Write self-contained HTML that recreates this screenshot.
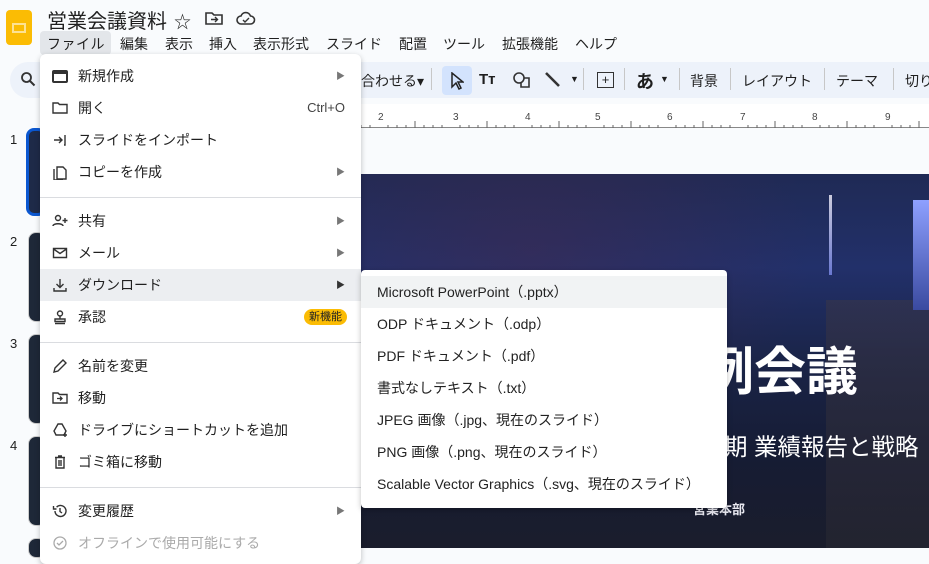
<!DOCTYPE html>
<html><head><meta charset="utf-8"><style>
*{margin:0;padding:0;box-sizing:border-box}
body{width:929px;height:548px;overflow:hidden;background:#f9fbfd;font-family:"Liberation Sans","Noto Sans CJK JP",sans-serif;color:#1f1f1f;position:relative}
.a{position:absolute;white-space:nowrap}
.menu{position:absolute;left:40px;top:54px;width:321px;height:510px;background:#fff;border-radius:6px;box-shadow:0 2px 6px rgba(0,0,0,.25)}
.it{position:absolute;left:0;width:321px;height:32px;font-size:14px;line-height:32px;padding-left:38px}
.it .arr{position:absolute;right:16px;top:0;font-size:9px;color:#777}
.ic{position:absolute;left:12px;top:8px;width:16px;height:16px}
.sep{position:absolute;left:0;width:321px;height:1px;background:#dadce0}
.sub{position:absolute;left:361px;top:270px;width:366px;height:238px;background:#fff;border-radius:4px;box-shadow:0 2px 6px rgba(0,0,0,.25)}
.si{position:absolute;left:0;width:366px;height:32px;line-height:32px;font-size:14px;padding-left:16px;color:#222}
</style></head><body>
<!-- header -->
<div class="a" style="left:6px;top:10px;width:26px;height:35px;background:#fbbc04;border-radius:4px"></div>
<div class="a" style="left:12px;top:23px;width:14px;height:10px;border:2px solid #fde293"></div>
<div class="a" style="left:47px;top:5px;font-size:20px">営業会議資料</div>
<div class="a" style="left:174px;top:8px;font-size:17px">☆</div>
<svg class="a" style="left:205px;top:11px" width="18" height="14"><path d="M1 2h6l2 2h8v9H1z" fill="none" stroke="#333" stroke-width="1.6"/><path d="M6 8.5h6M10 6l2.5 2.5L10 11" fill="none" stroke="#333" stroke-width="1.4"/></svg>
<svg class="a" style="left:236px;top:11px" width="20" height="14"><path d="M5 13a4 4 0 010-8 5 5 0 019.5 0 4 4 0 010 8z" fill="none" stroke="#333" stroke-width="1.6"/><path d="M7 9l2 2 4-4" fill="none" stroke="#333" stroke-width="1.4"/></svg>
<div class="a" style="left:40px;top:31px;width:71px;height:24px;background:#e3e6ea;border-radius:4px"></div>
<div class="a" style="left:47px;top:34px;font-size:14px;letter-spacing:0.5px">ファイル</div>
<div class="a" style="left:120px;top:34px;font-size:14px">編集</div>
<div class="a" style="left:165px;top:34px;font-size:14px">表示</div>
<div class="a" style="left:209px;top:34px;font-size:14px">挿入</div>
<div class="a" style="left:253px;top:34px;font-size:14px">表示形式</div>
<div class="a" style="left:326px;top:34px;font-size:14px">スライド</div>
<div class="a" style="left:399px;top:34px;font-size:14px">配置</div>
<div class="a" style="left:443px;top:34px;font-size:14px">ツール</div>
<div class="a" style="left:502px;top:34px;font-size:14px">拡張機能</div>
<div class="a" style="left:575px;top:34px;font-size:14px">ヘルプ</div>
<!-- toolbar -->
<div class="a" style="left:10px;top:62px;width:940px;height:36px;background:#edf2fa;border-radius:18px"></div>
<svg class="a" style="left:20px;top:71px" width="16" height="16"><circle cx="6.5" cy="6.5" r="4.5" fill="none" stroke="#333" stroke-width="1.8"/><path d="M10 10l4.5 4.5" stroke="#333" stroke-width="2"/></svg>
<div class="a" style="left:361px;top:71px;font-size:14px">合わせる▾</div>
<div class="a" style="left:431px;top:68px;width:1px;height:22px;background:#c7c7c7"></div>
<div class="a" style="left:442px;top:66px;width:30px;height:29px;background:#d3e3fd;border-radius:4px"></div>
<svg class="a" style="left:450px;top:72px" width="14" height="18"><path d="M2 1v14l4-4 3 6 2-1-3-6h5z" fill="none" stroke="#222" stroke-width="1.5"/></svg>
<div class="a" style="left:479px;top:71px;font-size:15px;font-weight:bold">Tт</div>
<svg class="a" style="left:512px;top:71px" width="20" height="18"><circle cx="7" cy="7" r="5" fill="none" stroke="#333" stroke-width="1.6"/><path d="M12 7h5v9H9v-4" fill="none" stroke="#333" stroke-width="1.6"/></svg>
<svg class="a" style="left:544px;top:71px" width="18" height="18"><path d="M2 2l13 13" stroke="#333" stroke-width="2.6"/></svg>
<div class="a" style="left:570px;top:74px;font-size:9px">▼</div>
<div class="a" style="left:583px;top:68px;width:1px;height:22px;background:#c7c7c7"></div>
<div class="a" style="left:597px;top:72px;width:17px;height:16px;border:1.5px solid #333;font-size:13px;line-height:13px;text-align:center">+</div>
<div class="a" style="left:624px;top:68px;width:1px;height:22px;background:#c7c7c7"></div>
<div class="a" style="left:636px;top:68px;font-size:18px;font-weight:bold">あ</div>
<div class="a" style="left:660px;top:74px;font-size:9px">▼</div>
<div class="a" style="left:679px;top:68px;width:1px;height:22px;background:#c7c7c7"></div>
<div class="a" style="left:690px;top:71px;font-size:14px">背景</div>
<div class="a" style="left:730px;top:68px;width:1px;height:22px;background:#c7c7c7"></div>
<div class="a" style="left:742px;top:71px;font-size:14px">レイアウト</div>
<div class="a" style="left:824px;top:68px;width:1px;height:22px;background:#c7c7c7"></div>
<div class="a" style="left:836px;top:71px;font-size:14px">テーマ</div>
<div class="a" style="left:893px;top:68px;width:1px;height:22px;background:#c7c7c7"></div>
<div class="a" style="left:905px;top:71px;font-size:14px">切り</div>
<!-- ruler -->
<div class="a" style="left:361px;top:104px;width:568px;height:24px;background:#fff;border-bottom:1px solid #888"></div>
<svg class="a" style="left:361px;top:110px" width="568" height="18">
<g fill="#444" font-size="10" font-family="Liberation Sans">
<text x="17" y="10">2</text><text x="92" y="10">3</text><text x="164" y="10">4</text><text x="234" y="10">5</text><text x="306" y="10">6</text><text x="379" y="10">7</text><text x="451" y="10">8</text><text x="524" y="10">9</text></g>
<g stroke="#666"><path d="M0 18v-3M9 18v-3M27 18v-3M36 18v-3M45 18v-3M54 18v-7M63 18v-3M72 18v-3M81 18v-3M99 18v-3M108 18v-3M117 18v-3M126 18v-7M135 18v-3M144 18v-3M153 18v-3M171 18v-3M180 18v-3M189 18v-3M198 18v-7M207 18v-3M216 18v-3M225 18v-3M243 18v-3M252 18v-3M261 18v-3M270 18v-7M279 18v-3M288 18v-3M297 18v-3M315 18v-3M324 18v-3M333 18v-3M342 18v-7M351 18v-3M360 18v-3M369 18v-3M387 18v-3M396 18v-3M405 18v-3M414 18v-7M423 18v-3M432 18v-3M441 18v-3M459 18v-3M468 18v-3M477 18v-3M486 18v-7M495 18v-3M504 18v-3M513 18v-3M531 18v-3M540 18v-3M549 18v-3M558 18v-7"/></g></svg>
<!-- slide -->
<div class="a" style="left:361px;top:174px;width:568px;height:374px;background:linear-gradient(180deg,#1f2a55 0%,#22306a 25%,#1a2448 50%,#161c34 75%,#1a1d2c 100%)"></div>
<div class="a" style="left:361px;top:174px;width:568px;height:374px;background:radial-gradient(ellipse at 30% 20%,rgba(80,40,70,.35),transparent 50%)"></div>
<div class="a" style="left:826px;top:300px;width:103px;height:248px;background:linear-gradient(180deg,rgba(60,55,70,.5),rgba(40,40,50,.6))"></div>
<div class="a" style="left:829px;top:195px;width:3px;height:80px;background:linear-gradient(#ccd,#6a78d0)"></div>
<div class="a" style="left:913px;top:200px;width:16px;height:110px;background:linear-gradient(#8ea0ff,#3a4aa0)"></div>
<div class="a" style="left:702px;top:342px;font-size:52px;font-weight:bold;color:#fff;line-height:62px">例会議</div>
<div class="a" style="left:724px;top:428px;font-size:23.5px;color:#fff">期 業績報告と戦略</div>
<div class="a" style="left:693px;top:499px;font-size:13px;font-weight:bold;color:#e8e8f0">営業本部</div>
<!-- left thumbnails -->
<div class="a" style="left:10px;top:132px;font-size:13px">1</div>
<div class="a" style="left:10px;top:234px;font-size:13px">2</div>
<div class="a" style="left:10px;top:336px;font-size:13px">3</div>
<div class="a" style="left:10px;top:438px;font-size:13px">4</div>
<div class="a" style="left:26px;top:128px;width:20px;height:88px;border:3px solid #0b57d0;border-radius:8px;background:#1e2a48"></div>
<div class="a" style="left:28px;top:232px;width:18px;height:90px;border:1px solid #ccc;border-radius:8px;background:#1e2838"></div>
<div class="a" style="left:28px;top:334px;width:18px;height:90px;border:1px solid #ccc;border-radius:8px;background:#1e2838"></div>
<div class="a" style="left:28px;top:436px;width:18px;height:90px;border:1px solid #ccc;border-radius:8px;background:#1e2838"></div>
<div class="a" style="left:28px;top:538px;width:18px;height:20px;border:1px solid #ccc;border-radius:8px;background:#1e2838"></div>
<!-- file menu -->
<div class="menu">
<div class="it" style="top:6px"><span class="ic" style="top:10px;height:13px;border:2px solid #333;border-top-width:4px;border-radius:2px"></span>新規作成<span class="arr">▶</span></div>
<div class="it" style="top:38px"><svg class="ic" viewBox="0 0 16 16"><path d="M1 3h5l1.5 1.5H15V13H1z" fill="none" stroke="#333" stroke-width="1.4"/></svg>開く<span class="arr" style="font-size:13px;color:#444">Ctrl+O</span></div>
<div class="it" style="top:70px"><svg class="ic" viewBox="0 0 16 16"><path d="M2 8h8M7 5l3 3-3 3M13 3v10h-1" fill="none" stroke="#333" stroke-width="1.4"/></svg>スライドをインポート</div>
<div class="it" style="top:102px"><svg class="ic" viewBox="0 0 16 16"><path d="M5 3h6l3 3v9H5zM2 5v11h9" fill="none" stroke="#333" stroke-width="1.4"/></svg>コピーを作成<span class="arr">▶</span></div>
<div class="sep" style="top:143px"></div>
<div class="it" style="top:151px"><svg class="ic" viewBox="0 0 16 16"><circle cx="6" cy="5" r="2.5" fill="none" stroke="#333" stroke-width="1.4"/><path d="M1 13c0-3 10-3 10 0M13 5v5M10.5 7.5h5" fill="none" stroke="#333" stroke-width="1.4"/></svg>共有<span class="arr">▶</span></div>
<div class="it" style="top:183px"><svg class="ic" viewBox="0 0 16 16"><path d="M1.5 3.5h13v9h-13zM1.5 4l6.5 4.5L14.5 4" fill="none" stroke="#333" stroke-width="1.4"/></svg>メール<span class="arr">▶</span></div>
<div class="it" style="top:215px;background:#eceef1"><svg class="ic" viewBox="0 0 16 16"><path d="M8 2v8M4.5 7L8 10.5 11.5 7M2 11v3h12v-3" fill="none" stroke="#333" stroke-width="1.4"/></svg>ダウンロード<span class="arr" style="color:#333">▶</span></div>
<div class="it" style="top:247px"><svg class="ic" viewBox="0 0 16 16"><circle cx="8" cy="4.5" r="2.5" fill="none" stroke="#333" stroke-width="1.4"/><path d="M8 7v3M3 10h10v2.5H3zM3 14.5h10" fill="none" stroke="#333" stroke-width="1.4"/></svg>承認<span class="arr" style="right:14px;top:8px;height:16px;line-height:16px;background:#fbbc04;color:#222;font-size:11px;padding:0 5px;border-radius:8px">新機能</span></div>
<div class="sep" style="top:288px"></div>
<div class="it" style="top:296px"><svg class="ic" viewBox="0 0 16 16"><path d="M2 14l1-4 8-8 3 3-8 8z" fill="none" stroke="#333" stroke-width="1.4"/></svg>名前を変更</div>
<div class="it" style="top:328px"><svg class="ic" viewBox="0 0 16 16"><path d="M1 3h5l1.5 1.5H15V13H1z" fill="none" stroke="#333" stroke-width="1.4"/><path d="M5 8.5h5M8 6.5l2 2-2 2" fill="none" stroke="#333" stroke-width="1.3"/></svg>移動</div>
<div class="it" style="top:360px"><svg class="ic" viewBox="0 0 16 16"><path d="M6 2h4l4 7-2 4H4L2 9z" fill="none" stroke="#333" stroke-width="1.4"/><path d="M13 11v4M11 13h4" stroke="#333" stroke-width="1.4"/></svg>ドライブにショートカットを追加</div>
<div class="it" style="top:392px"><svg class="ic" viewBox="0 0 16 16"><path d="M3 3.5h10M6 2h4M4 4v10h8V4M7 6v6M9 6v6" fill="none" stroke="#333" stroke-width="1.4"/></svg>ゴミ箱に移動</div>
<div class="sep" style="top:433px"></div>
<div class="it" style="top:441px"><svg class="ic" viewBox="0 0 16 16"><path d="M3 8a5.5 5.5 0 101.6-3.9M1.5 3v3h3M8 5v3.5l2 1.5" fill="none" stroke="#333" stroke-width="1.4"/></svg>変更履歴<span class="arr">▶</span></div>
<div class="it" style="top:473px;color:#aaa"><svg class="ic" viewBox="0 0 16 16"><circle cx="8" cy="8" r="6" fill="none" stroke="#aaa" stroke-width="1.3"/><path d="M5 8l2 2 4-4" fill="none" stroke="#aaa" stroke-width="1.3"/></svg>オフラインで使用可能にする</div>
</div>
<!-- submenu -->
<div class="sub">
<div class="si" style="top:6px;background:#f1f3f4">Microsoft PowerPoint（.pptx）</div>
<div class="si" style="top:38px">ODP ドキュメント（.odp）</div>
<div class="si" style="top:70px">PDF ドキュメント（.pdf）</div>
<div class="si" style="top:102px">書式なしテキスト（.txt）</div>
<div class="si" style="top:134px">JPEG 画像（.jpg、現在のスライド）</div>
<div class="si" style="top:166px">PNG 画像（.png、現在のスライド）</div>
<div class="si" style="top:198px">Scalable Vector Graphics（.svg、現在のスライド）</div>
</div>
</body></html>
